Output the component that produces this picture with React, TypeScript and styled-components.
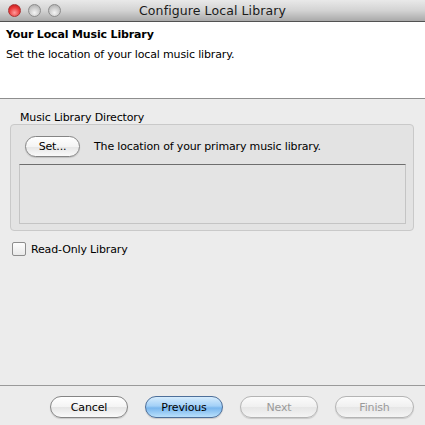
import React, { FC } from "react";
import styled, { createGlobalStyle } from "styled-components";

const GlobalStyle = createGlobalStyle`
  html, body {
    margin: 0;
    padding: 0;
    background: #ececec;
  }
  #root {
    width: 425px;
    height: 425px;
  }
`;

const Window = styled.div`
  width: 425px;
  height: 425px;
  display: flex;
  flex-direction: column;
  font-family: "DejaVu Sans", "Liberation Sans", sans-serif;
  font-size: 11px;
  letter-spacing: -0.15px;
  color: #000;
  background: #ececec;
  overflow: hidden;
`;

// 标题栏
const TitleBar = styled.div`
  position: relative;
  height: 21px;
  flex: none;
  display: flex;
  align-items: center;
  justify-content: center;
  background: linear-gradient(#e9e9e9, #d3d3d3 50%, #a9a9a9);
  border-bottom: 1px solid #525252;
`;

const Lights = styled.div`
  position: absolute;
  left: 8px;
  top: 4px;
  display: flex;
  gap: 7px;
`;

const Light = styled.span<{ $red?: boolean }>`
  width: 13px;
  height: 13px;
  border-radius: 50%;
  box-sizing: border-box;
  border: 1px solid ${(p) => (p.$red ? "#a33" : "#8c8c8c")};
  background: ${(p) =>
    p.$red
      ? "radial-gradient(circle at 50% 70%, #ff9b9b, #e93a3a 55%, #b51414)"
      : "radial-gradient(circle at 50% 70%, #f4f4f4, #c9c9c9 55%, #a4a4a4)"};
`;

const Title = styled.div`
  font-size: 12.5px;
  letter-spacing: 0.1px;
  color: #1a1a1a;
`;

// 白色说明区
const Header = styled.div`
  height: 77px;
  flex: none;
  background: #fff;
  border-bottom: 1px solid #8e8e8e;
  padding: 6px 6px 0;
  box-sizing: border-box;
`;

const HeaderTitle = styled.div`
  font-weight: bold;
  line-height: 14px;
`;

const HeaderText = styled.div`
  margin-top: 6px;
  line-height: 14px;
`;

const Content = styled.div`
  flex: 1;
  padding: 13px 11px 0 10px;
  border-bottom: 1px solid #9a9a9a;
`;

const GroupLabel = styled.div`
  margin-left: 10px;
  line-height: 12px;
`;

const GroupBox = styled.div`
  height: 107px;
  box-sizing: border-box;
  border: 1px solid #c9c9c9;
  border-radius: 4px;
  background: #e3e3e3;
  padding: 11px 7px 0 8px;
`;

const SetRow = styled.div`
  display: flex;
  align-items: center;
  gap: 14px;
  height: 21px;
  padding-left: 6px;
`;

const InnerBox = styled.div`
  margin-top: 7px;
  height: 60px;
  box-sizing: border-box;
  border: 1px solid #c4c4c4;
  border-top-color: #6e6e6e;
  background: #e4e4e4;
`;

const CheckRow = styled.label`
  display: flex;
  align-items: center;
  gap: 5px;
  margin-top: 11px;
  margin-left: 2px;
`;

const CheckBox = styled.span`
  width: 14px;
  height: 14px;
  box-sizing: border-box;
  border: 1px solid #8d8d8d;
  border-radius: 2px;
  background: linear-gradient(#fdfdfd, #e9e9e9);
`;

// 底部按钮
const Footer = styled.div`
  height: 39px;
  flex: none;
  display: flex;
  justify-content: flex-end;
  align-items: flex-start;
  gap: 17px;
  padding: 10px 11px 0 0;
  box-sizing: border-box;
`;

const Pill = styled.button<{ $w: number; $primary?: boolean; $disabled?: boolean }>`
  width: ${(p) => p.$w}px;
  height: 22px;
  border-radius: 11px;
  font-family: inherit;
  font-size: 11px;
  letter-spacing: -0.15px;
  padding: 0;
  color: ${(p) => (p.$disabled ? "#9a9a9a" : "#000")};
  border: 1px solid
    ${(p) => (p.$primary ? "#4d6f9a" : p.$disabled ? "#b4b4b4" : "#858585")};
  background: ${(p) =>
    p.$primary
      ? "linear-gradient(#d6ecfd, #a3d0f7 45%, #79b6ee 55%, #b9e0fb)"
      : p.$disabled
      ? "linear-gradient(#fbfbfb, #f0f0f0 50%, #e6e6e6 51%, #f4f4f4)"
      : "linear-gradient(#ffffff, #f4f4f4 50%, #e5e5e5 51%, #fafafa)"};
  box-shadow: 0 1px 1px rgba(0, 0, 0, 0.15);
`;

const SmallPill = styled(Pill)`
  height: 21px;
`;

const App: FC = () => {
  return (
    <Window>
      <GlobalStyle />
      <TitleBar>
        <Lights>
          <Light $red />
          <Light />
          <Light />
        </Lights>
        <Title>Configure Local Library</Title>
      </TitleBar>
      <Header>
        <HeaderTitle>Your Local Music Library</HeaderTitle>
        <HeaderText>Set the location of your local music library.</HeaderText>
      </Header>
      <Content>
        <GroupLabel>Music Library Directory</GroupLabel>
        <GroupBox>
          <SetRow>
            <SmallPill $w={55}>Set...</SmallPill>
            <span>The location of your primary music library.</span>
          </SetRow>
          <InnerBox />
        </GroupBox>
        <CheckRow>
          <CheckBox />
          <span>Read-Only Library</span>
        </CheckRow>
      </Content>
      <Footer>
        <Pill $w={78}>Cancel</Pill>
        <Pill $w={78} $primary>
          Previous
        </Pill>
        <Pill $w={78} $disabled>
          Next
        </Pill>
        <Pill $w={79} $disabled>
          Finish
        </Pill>
      </Footer>
    </Window>
  );
};

export default App;
